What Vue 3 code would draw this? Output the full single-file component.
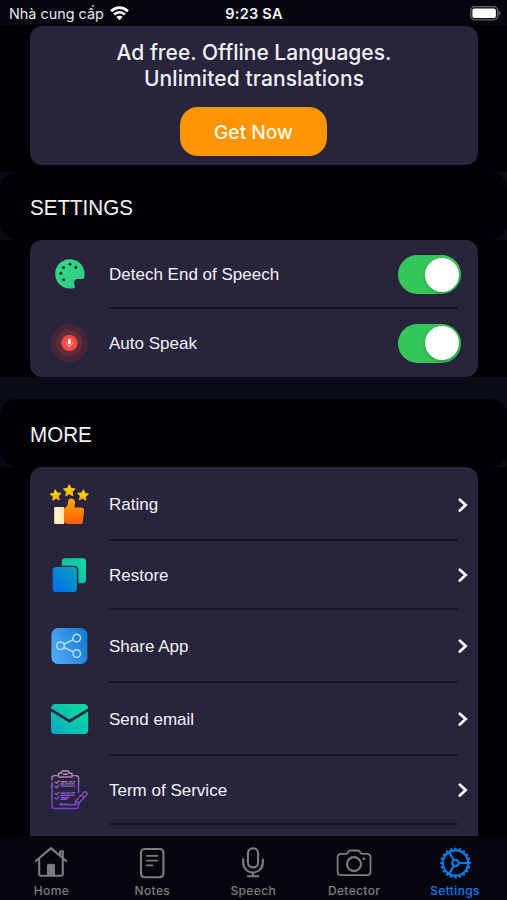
<script setup>
const toggles = [
  { icon: 'palette', label: 'Detech End of Speech' },
  { icon: 'mic', label: 'Auto Speak' },
]
const links = [
  { icon: 'rating', label: 'Rating', size: 'first' },
  { icon: 'restore', label: 'Restore', size: 'short' },
  { icon: 'share', label: 'Share App', size: 'tall' },
  { icon: 'mail', label: 'Send email', size: 'tall' },
  { icon: 'terms', label: 'Term of Service', size: 'mid' },
]
const tabs = ['Home', 'Notes', 'Speech', 'Detector', 'Settings']
const teeth = Array.from({ length: 20 }, (_, i) => i * 18)
</script>

<template>
  <div class="screen">
    <header class="status">
      <div class="carrier">
        <span>Nhà cung cấp</span>
        <svg width="19" height="15" viewBox="0 0 19 15" fill="none" stroke="#fff" stroke-width="2.7">
          <path d="M1.1 5.2C6 .4 13 .4 17.9 5.2M4.1 8.5c3.3-3 7.5-3 10.8 0" />
          <path d="M9.5 14.2 6.3 11c1.8-1.7 4.6-1.7 6.4 0Z" fill="#fff" stroke="none" />
        </svg>
      </div>
      <div class="time">9:23 SA</div>
      <svg class="battery" width="31" height="15" viewBox="0 0 31 15">
        <rect x=".7" y=".7" width="27" height="13.1" rx="4" fill="#111119" stroke="#62626a" stroke-width="1.3" />
        <rect x="2.4" y="2.4" width="23.5" height="9.7" rx="2.2" fill="#fff" />
        <path d="M28.8 5v4.7q1.6-.8 1.6-2.3T28.8 5Z" fill="#72727a" />
      </svg>
    </header>

    <main class="content">
      <section class="card promo">
        <p class="line one">Ad free. Offline Languages.</p>
        <p class="line two">Unlimited translations</p>
        <button class="cta"><span>Get Now</span></button>
      </section>

      <div class="band first-band"><h2>SETTINGS</h2></div>

      <section class="card settings">
        <div v-for="t in toggles" :key="t.icon" class="row">
          <div class="icon">
            <svg v-if="t.icon === 'palette'" width="40" height="40" viewBox="0 0 40 40">
              <defs><linearGradient id="pal" x1="0" y1="0" x2="1" y2="1"><stop stop-color="#37db87" /><stop offset="1" stop-color="#2dc882" /></linearGradient></defs>
              <path d="M20 5.3C11.6 5.3 5.2 11.8 5.2 20S11.8 34.6 20 34.6c3.1 0 5-.5 5-1.7 0-1.4-.9-2.1-.9-4 0-2.3 1.2-3.9 3.6-3.9h4.8c1.6 0 2.1-2 2.1-5C34.6 11.7 28.3 5.3 20 5.3Z" fill="url(#pal)" />
              <g fill="#173c35"><circle cx="20" cy="10.2" r="1.6" /><circle cx="25.8" cy="13.4" r="1.6" /><circle cx="13.5" cy="13.5" r="1.6" /><circle cx="10.9" cy="19.4" r="1.6" /><circle cx="13.5" cy="25.8" r="1.6" /></g>
            </svg>
            <svg v-else width="40" height="40" viewBox="0 0 40 40">
              <circle cx="19.4" cy="20" r="19.2" fill="#442638" /><circle cx="19.4" cy="20" r="13.2" fill="#642c3b" /><circle cx="19.4" cy="20" r="8" fill="#fa4b46" />
              <rect x="18" y="15.7" width="2.8" height="5.5" rx="1.4" fill="#fff" />
              <path d="M16.4 19.4c0 4 6 4 6 0M19.4 22.4v2" fill="none" stroke="#ffd6d3" stroke-width=".9" />
            </svg>
          </div>
          <div class="body">
            <span class="label">{{ t.label }}</span>
            <span class="switch"><i></i></span>
          </div>
        </div>
      </section>

      <div class="band second-band"><h2>MORE</h2></div>

      <section class="card more">
        <div v-for="l in links" :key="l.icon" class="row" :class="l.size">
          <div class="icon">
            <svg v-if="l.icon === 'rating'" width="40" height="42" viewBox="0 0 40 42">
              <defs>
                <linearGradient id="thumb" x1="0" y1="0" x2="0" y2="1"><stop stop-color="#ffa800" /><stop offset="1" stop-color="#ff5d0b" /></linearGradient>
                <linearGradient id="star" x1="0" y1="0" x2="0" y2="1"><stop stop-color="#ffe000" /><stop offset="1" stop-color="#ffae10" /></linearGradient>
                <linearGradient id="cuff"><stop stop-color="#fff3cd" /><stop offset="1" stop-color="#ffe7ad" /></linearGradient>
                <path id="starShape" d="m0-6 1.8 3.7 4.1.6-3 2.9.7 4.1L0 3.4l-3.6 1.9.7-4.1-3-2.9 4.1-.6Z" fill="url(#star)" stroke="url(#star)" stroke-linejoin="round" stroke-width=".8" />
              </defs>
              <use href="#starShape" transform="translate(5.7 12.2) rotate(-5) scale(.93)" />
              <use href="#starShape" transform="translate(19.3 7.6)" />
              <use href="#starShape" transform="translate(33 12.2) rotate(5) scale(.93)" />
              <rect x="4.2" y="24" width="10" height="17" rx="1" fill="url(#cuff)" />
              <path d="M14 25.2c3-.8 4.2-3.3 4.2-7.1 0-3.7 6.9-3.5 6.9 1.5 0 2.2-.3 3.3-.8 4.8h7.2c1.7 0 2.7 1.2 2.6 2.8l-1.2 11.2c-.2 1.7-1.2 2.6-2.9 2.6H17.7c-1.5 0-2.4-1.3-3.7-1.5Z" fill="url(#thumb)" />
            </svg>
            <svg v-else-if="l.icon === 'restore'" width="40" height="40" viewBox="0 0 40 40">
              <defs>
                <linearGradient id="back" x1="1" y1="0" x2="0" y2="1"><stop stop-color="#0fdda0" /><stop offset="1" stop-color="#08aeb8" /></linearGradient>
                <linearGradient id="front" x1="1" y1="0" x2="0" y2="1"><stop stop-color="#03a5b5" /><stop offset="1" stop-color="#0768ee" /></linearGradient>
              </defs>
              <rect x="11.8" y="3.3" width="24.2" height="25" rx="3.4" fill="url(#back)" />
              <rect x="1.4" y="10.7" width="27" height="27.3" rx="4.5" fill="#27243b" />
              <rect x="2.6" y="12" width="24.3" height="25" rx="3.4" fill="url(#front)" />
            </svg>
            <svg v-else-if="l.icon === 'share'" width="40" height="40" viewBox="0 0 40 40">
              <defs><linearGradient id="shr" x1="0" y1=".7" x2="1" y2=".3"><stop stop-color="#4faaf6" /><stop offset="1" stop-color="#197bd0" /></linearGradient></defs>
              <rect x="1.4" y="2" width="36" height="36" rx="6.5" fill="url(#shr)" />
              <g fill="none" stroke="#b5e4ff" stroke-width="1.4"><circle cx="10.5" cy="19.8" r="3.8" /><circle cx="26.7" cy="12" r="3.8" /><circle cx="26.7" cy="27.6" r="3.8" /><path d="m14 18 9.3-4.4M14 21.5l9.3 4.4" /></g>
            </svg>
            <svg v-else-if="l.icon === 'mail'" width="40" height="40" viewBox="0 0 40 40">
              <defs><linearGradient id="eml" gradientUnits="userSpaceOnUse" x1="2" y1="34" x2="25" y2="9"><stop stop-color="#06a9c3" /><stop offset="1" stop-color="#09d5a2" /></linearGradient></defs>
              <path d="M1 9.3C1.5 6.5 3 5 5 5h29c2.2 0 3.7 1.4 4.2 4.2L19.6 20.4Z" fill="url(#eml)" />
              <path d="m1 12.5 18.6 11.2 18.6-11.2V31q0 4-4 4H5q-4 0-4-4Z" fill="url(#eml)" />
            </svg>
            <svg v-else width="40" height="42" viewBox="0 0 40 42">
              <defs><linearGradient id="trm" gradientUnits="userSpaceOnUse" x1="16" y1="0" x2="19" y2="40"><stop stop-color="#c99aab" /><stop offset=".48" stop-color="#8b58c4" /><stop offset="1" stop-color="#7940cf" /></linearGradient></defs>
              <g fill="none" stroke="url(#trm)" stroke-width="1.35" stroke-linecap="round" stroke-linejoin="round">
                <path d="M8.5 6.6H4.4Q2 6.6 2 9v2m0 3v21.5Q2 39.5 4.4 39.5h21.8q2.4 0 2.4-2.4v-2M22 6.6h4.2q2.4 0 2.4 2.4v14.2" />
                <path d="M8.5 4.2h3.2V3q0-1 1-1h5.2q1 0 1 1v1.2H22V8H8.5ZM13.5 5.2h3.8" />
                <path d="m5.2 13 1.4 1.3 2.2-2.5m-3.6 5.7 1.4 1.3L8.8 16.3m-3.6 8.1 1.4 1.3 2.2-2.5m-3.6 5.7 1.4 1.3 2.2-2.5" />
                <path d="M11 12.7h6m2.5 0h2m1.8 0h1M11 15h3m2-.1h8M11 17.1h14M11 24h4m1.7 0h3m2-.3h3M11 26.2h13M11 28.5h8M11 30.2h6" />
                <path d="M9.8 36c1.4-3 2.4-1 1.7.2 2-2 3-1.7 2.4 0 2-2.2 3.2-1.2 2.5 0 2.2-1.7 3-.9 3.7 0 1-1 2.3-.6 3.2-.5" />
                <path d="m24.5 36.2 1.4-4.6 7.8-8.2q1.6-1.3 2.9 0 1.2 1.4-.2 2.9l-7.8 8.2Zm1.4-4.6 2.7 2.9m2.8-8.7 2.7 2.9" />
              </g>
            </svg>
          </div>
          <div class="body">
            <span class="label">{{ l.label }}</span>
            <svg class="chevron" width="12" height="16" viewBox="0 0 12 16"><path d="m2.8 2.7 5.9 5.4-5.9 5.4" fill="none" stroke="#fff" stroke-width="2.7" stroke-linecap="round" stroke-linejoin="miter" /></svg>
          </div>
        </div>
      </section>
    </main>

    <nav class="tabs">
      <div v-for="tab in tabs" :key="tab" class="tab" :class="{ active: tab === 'Settings' }">
        <svg width="36" height="36" viewBox="0 0 36 36" fill="none" stroke="currentColor" stroke-width="2.1" stroke-linejoin="round" stroke-linecap="round">
          <template v-if="tab === 'Home'">
            <path d="M2.8 16 18 3.1 33.2 16M6.2 14v15.3q0 1.4 1.4 1.4h20.8q1.4 0 1.4-1.4V14M27.2 10V6.2h2.6v6.2" />
            <path d="M14.5 30V20.3q0-1 1-1h5q1 0 1 1V30Z" fill="currentColor" stroke-width="1" />
          </template>
          <template v-else-if="tab === 'Notes'">
            <rect x="7" y="4" width="22.4" height="28.3" rx="3.5" />
            <path d="M12.8 10.8h10.7M12.8 15.6h10.7M12.8 20.4h5.5" stroke-width="1.7" />
          </template>
          <template v-else-if="tab === 'Speech'">
            <rect x="12.9" y="3.2" width="10.2" height="19.2" rx="5.1" />
            <path d="M8.2 14.2v3.5a9.8 9.8 0 0 0 19.6 0v-3.5M18 27.5v3.8M12.7 31.3h10.6" />
          </template>
          <template v-else-if="tab === 'Detector'">
            <path d="M5 8.8h5q1.4 0 2-1.3l.4-.8Q13 5.5 14.3 5.5h7.6q1.3 0 1.9 1.2l.5.8q.6 1.3 2 1.3h4.8q3.4 0 3.4 3.4v14.5q0 3.4-3.4 3.4H5q-3.4 0-3.4-3.4V12.2q0-3.4 3.4-3.4Z" stroke-width="1.8" />
            <circle cx="18" cy="19.1" r="7" /><circle cx="27.8" cy="13.8" r="1" fill="currentColor" stroke-width=".8" />
          </template>
          <template v-else>
            <circle cx="18.5" cy="18" r="12.6" /><circle cx="18.5" cy="18" r="3.2" />
            <path d="M21.7 18h9.4M16.9 15.2 12.1 7.1M16.9 20.8l-4.8 8.1" />
            <path v-for="a in teeth" :key="a" d="M18.5 4.8V2.7" :transform="`rotate(${a} 18.5 18)`" stroke-width="2.4" stroke-linecap="butt" />
          </template>
        </svg>
        <span>{{ tab }}</span>
      </div>
    </nav>
  </div>
</template>

<style>
body { margin: 0; background: #010105; }
</style>

<style scoped>
* { box-sizing: border-box; }
.screen { width: 507px; height: 900px; overflow: hidden; display: flex; flex-direction: column; background: #010105; color: #f3f1fb; font-family: Inter, sans-serif; }
.status { height: 26px; flex: none; display: grid; grid-template-columns: 1fr auto 1fr; align-items: center; padding: 1px 6px 0 9px; background: #05060d; }
.carrier { display: flex; align-items: center; gap: 6px; font-size: 14.4px; white-space: nowrap; color: #e5e5eb; }
.time { font-size: 14.5px; font-weight: 600; color: #f5f5f8; letter-spacing: .25px; margin-right: 2px; }
.battery { justify-self: end; }
.content { flex: 1; min-height: 0; overflow: hidden; }
.card { margin: 0 29px 0 30px; border-radius: 12px; background: #27243b; }
.promo { height: 139px; display: flex; flex-direction: column; align-items: center; padding-top: 14px; }
.line { margin: 0; font-size: 21px; line-height: 26px; font-weight: 500; white-space: nowrap; }
.line.two { letter-spacing: .1px; }
.cta { width: 147px; height: 49px; margin: 15px 1px 0 0; border: 0; padding: 0; border-radius: 18px; background: #ff9502; color: #fff9e9; font: 500 19.2px Inter, sans-serif; }
.band { height: 68px; display: flex; align-items: center; padding: 4px 30px 0; position: relative; isolation: isolate; background: #080a15; }
.band::before { content: ''; position: absolute; inset: 0; z-index: -1; border-radius: 17px; background: #010105; }
.first-band { margin-top: 7px; }
.second-band { box-shadow: 0 -22px #0a0d18; margin-top: 22px; }
h2 { margin: 0; font: 400 22.5px "Liberation Sans", sans-serif; color: #f3f3f4; white-space: nowrap; transform: scaleX(.915); transform-origin: left; }
.settings { height: 137px; }
.settings .row { height: 68.5px; }
.more { height: 380px; border-radius: 12px 12px 0 0; }
.row { display: flex; }
.row.first { height: 74px; }
.row.short { height: 69px; }
.row.tall { height: 73px; }
.row.mid { height: 69px; }
.icon { width: 79px; padding-left: 19.5px; display: flex; align-items: center; flex: none; }
.body { flex: 1; display: flex; align-items: center; justify-content: space-between; margin-right: 20px; padding-top: 3px; border-bottom: 2px solid #171624; }
.short .icon, .tall .icon, .mid .icon { padding-bottom: 2px; }
.short .body, .tall .body, .mid .body { padding-top: 1px; }
.settings .row:last-child .body { border-color: transparent; }
.label { font: 400 17px "Liberation Sans", sans-serif; white-space: nowrap; padding-top: 1px; }
.switch { width: 63px; height: 39px; border-radius: 20px; background: #35c759; padding: 2.5px; display: flex; justify-content: flex-end; flex: none; margin-right: -3px; }
.switch i { width: 34px; height: 34px; border-radius: 50%; background: #fff; box-shadow: 0 2px 4px #0003; }
.chevron { flex: none; margin-right: -11px; }
.tabs { height: 64px; flex: none; display: grid; grid-template-columns: repeat(5, 100.9px); padding-left: 1px; background: #05060d; }
.tab { display: flex; flex-direction: column; align-items: center; padding-top: 9px; color: #7c7c80; font-size: 12px; font-weight: 500; line-height: 15px; letter-spacing: .35px; }
.tab span { margin-top: 2px; }
.tab.active { color: #087cf0; }
</style>
